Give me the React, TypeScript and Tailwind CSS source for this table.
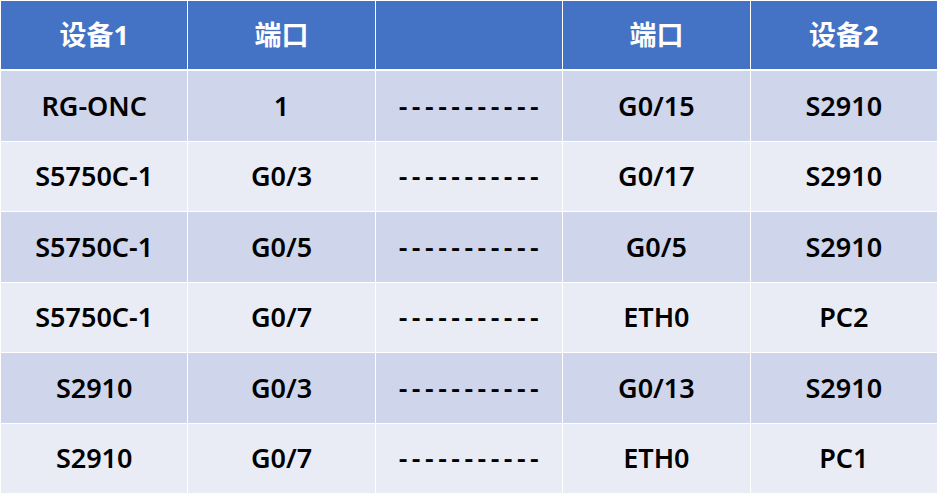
import React from "react";

const header = ["设备1", "端口", "", "端口", "设备2"];

const rows = [
  ["RG-ONC", "1", "G0/15", "S2910"],
  ["S5750C-1", "G0/3", "G0/17", "S2910"],
  ["S5750C-1", "G0/5", "G0/5", "S2910"],
  ["S5750C-1", "G0/7", "ETH0", "PC2"],
  ["S2910", "G0/3", "G0/13", "S2910"],
  ["S2910", "G0/7", "ETH0", "PC1"],
];

export default function App() {
  return (
    <div
      className="h-[496px] w-[940px] bg-white pl-px pt-px"
      style={{ fontFamily: '"Noto Sans", "Noto Sans CJK SC", sans-serif' }}
    >
      <div className="flex w-[936px] flex-col gap-[1px] bg-white">
        <div className="mb-[1px] grid h-[68px] grid-cols-5 gap-px">
          {header.map((h, i) => (
            <div
              key={i}
              className="flex items-center justify-center bg-[#4472c4] text-[27px] font-bold text-white"
            >
              {h}
            </div>
          ))}
        </div>
        {rows.map((r, i) => (
          <div key={i} className="grid h-[69.5px] grid-cols-5 gap-px">
            {[r[0], r[1], "-----------", r[2], r[3]].map((c, j) => (
              <div
                key={j}
                className={`flex items-center justify-center text-[27px] font-semibold text-black ${
                  i % 2 === 0 ? "bg-[#cfd5ea]" : "bg-[#e9ebf5]"
                } ${j === 2 ? "font-bold tracking-[4.5px] pl-[4px]" : ""}`}
              >
                {c}
              </div>
            ))}
          </div>
        ))}
      </div>
    </div>
  );
}
